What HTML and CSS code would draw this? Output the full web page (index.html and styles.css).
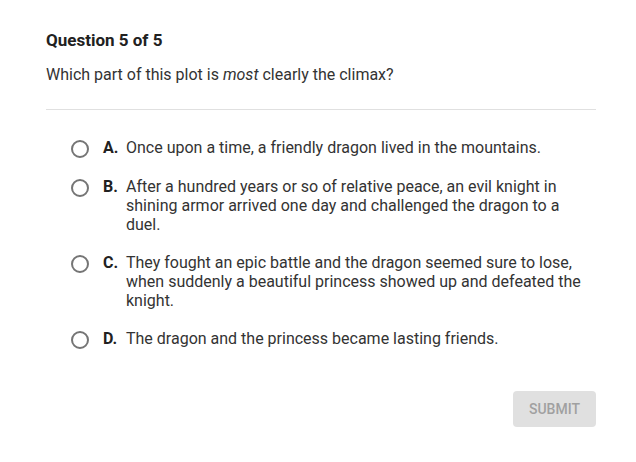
FILE: index.html
```html
<!DOCTYPE html>
<html>
<head>
<meta charset="utf-8">
<link rel="stylesheet" href="styles.css">
</head>
<body>
<div class="page">
  <div class="header">
    <h1 class="title">Question 5 of 5</h1>
    <p class="prompt">Which part of this plot is <em>most</em> clearly the climax?</p>
  </div>
  <ul class="options">
    <li class="option"><span class="radio"></span><span class="letter">A.</span><span class="text">Once upon a time, a friendly dragon lived in the mountains.</span></li>
    <li class="option"><span class="radio"></span><span class="letter">B.</span><span class="text">After a hundred years or so of relative peace, an evil knight in shining armor arrived one day and challenged the dragon to a duel.</span></li>
    <li class="option"><span class="radio"></span><span class="letter">C.</span><span class="text">They fought an epic battle and the dragon seemed sure to lose, when suddenly a beautiful princess showed up and defeated the knight.</span></li>
    <li class="option"><span class="radio"></span><span class="letter">D.</span><span class="text">The dragon and the princess became lasting friends.</span></li>
  </ul>
  <div class="actions">
    <button class="submit" disabled>SUBMIT</button>
  </div>
</div>
</body>
</html>
```
FILE: styles.css
```css
html, body {
  margin: 0;
  padding: 0;
  background: #ffffff;
}
body {
  font-family: Roboto, "Liberation Sans", Arial, sans-serif;
  color: #212121;
}
.page {
  width: 550px;
  padding: 30px 0 0 46px;
}
.header {
  border-bottom: 1px solid #e0e0e0;
  padding-bottom: 24px;
}
.title {
  margin: 0;
  font-size: 17px;
  line-height: 20px;
  font-weight: 700;
  color: #212121;
}
.prompt {
  margin: 15px 0 0 0;
  font-size: 16px;
  line-height: 20px;
  color: #333333;
}
.prompt em {
  font-style: italic;
}
.options {
  list-style: none;
  margin: 0;
  padding: 18.5px 0 0 24px;
  display: flex;
  flex-direction: column;
}
.option {
  display: flex;
  align-items: flex-start;
  padding: 9.5px 0;
  font-size: 16px;
  line-height: 19px;
  color: #333333;
}
.radio {
  flex: none;
  width: 14px;
  height: 14px;
  border: 2px solid #757575;
  border-radius: 50%;
  margin: 2px 14px 0 1px;
}
.letter {
  flex: none;
  width: 23px;
  font-weight: 700;
  color: #212121;
}
.text {
  flex: 1;
}
.actions {
  display: flex;
  justify-content: flex-end;
  padding-top: 32px;
}
.submit {
  width: 83px;
  height: 36px;
  border: none;
  border-radius: 4px;
  background: #e0e0e0;
  color: #a0a0a0;
  font-family: Roboto, "Liberation Sans", Arial, sans-serif;
  font-size: 14px;
  font-weight: 500;
  padding: 0;
}
```
